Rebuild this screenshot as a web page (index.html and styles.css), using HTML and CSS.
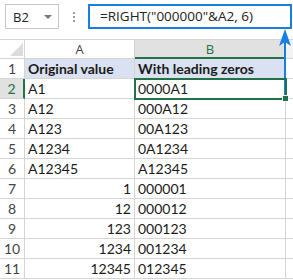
FILE: index.html
```html
<!DOCTYPE html>
<html>
<head>
    <title>RIGHT with leading zeros</title>
    <link rel="stylesheet" href="styles.css">
</head>
<body>
    <div class="toolbar">
        <div class="namebox">
            <span class="cellref">B2</span>
            <span class="caret"></span>
        </div>
        <div class="dots"><span></span><span></span><span></span></div>
        <div class="formula">=RIGHT("000000"&amp;A2, 6)</div>
    </div>

    <div class="sheet">
        <div class="corner"><span class="tri"></span></div>
        <div class="colhead">A</div>
        <div class="colhead sel">B</div>
        <div class="colhead last"></div>

        <div class="rowhead">1</div>
        <div class="cell hdr">Original value</div>
        <div class="cell hdr">With leading zeros</div>
        <div class="cell last"></div>

        <div class="rowhead sel">2</div>
        <div class="cell">A1</div>
        <div class="cell active">0000A1<span class="handle"></span></div>
        <div class="cell last"></div>

        <div class="rowhead">3</div>
        <div class="cell">A12</div>
        <div class="cell">000A12</div>
        <div class="cell last"></div>

        <div class="rowhead">4</div>
        <div class="cell">A123</div>
        <div class="cell">00A123</div>
        <div class="cell last"></div>

        <div class="rowhead">5</div>
        <div class="cell">A1234</div>
        <div class="cell">0A1234</div>
        <div class="cell last"></div>

        <div class="rowhead">6</div>
        <div class="cell">A12345</div>
        <div class="cell">A12345</div>
        <div class="cell last"></div>

        <div class="rowhead">7</div>
        <div class="cell num">1</div>
        <div class="cell">000001</div>
        <div class="cell last"></div>

        <div class="rowhead">8</div>
        <div class="cell num">12</div>
        <div class="cell">000012</div>
        <div class="cell last"></div>

        <div class="rowhead">9</div>
        <div class="cell num">123</div>
        <div class="cell">000123</div>
        <div class="cell last"></div>

        <div class="rowhead">10</div>
        <div class="cell num">1234</div>
        <div class="cell">001234</div>
        <div class="cell last"></div>

        <div class="rowhead">11</div>
        <div class="cell num">12345</div>
        <div class="cell">012345</div>
        <div class="cell last"></div>
    </div>

    <svg class="pointer" width="14" height="72" viewBox="0 0 14 72">
        <line x1="7" y1="6" x2="7" y2="72" stroke="#1a7fe3" stroke-width="2"/>
        <path d="M7 0 L13 17 L7 13 L1 17 Z" fill="#1a7fe3"/>
    </svg>
</body>
</html>
```

FILE: styles.css
```css
body {
    margin: 0;
    width: 293px;
    height: 280px;
    overflow: hidden;
    background: #fff;
    position: relative;
    font-family: Lato, "Liberation Sans", sans-serif;
    color: #1a1a1a;
}
.toolbar {
    display: flex;
    align-items: flex-start;
    height: 39px;
    padding: 4px 0 0 5px;
    box-sizing: border-box;
}
.namebox {
    width: 54px;
    height: 25px;
    box-sizing: border-box;
    border: 1px solid #c6c6c6;
    display: flex;
    align-items: center;
    justify-content: space-between;
    padding: 0 6px 0 7px;
    font-family: "Open Sans", sans-serif;
    font-size: 13px;
    color: #222;
}
.caret {
    width: 0;
    height: 0;
    border-left: 4px solid transparent;
    border-right: 4px solid transparent;
    border-top: 4px solid #777;
}
.dots {
    width: 29px;
    height: 25px;
    display: flex;
    flex-direction: column;
    align-items: center;
    justify-content: center;
    gap: 2px;
}
.dots span {
    width: 2px;
    height: 2px;
    background: #9a9a9a;
}
.formula {
    flex: 1;
    height: 25px;
    box-sizing: border-box;
    border: 2px solid #1a7fe3;
    border-right-width: 2px;
    margin-right: 1px;
    padding-left: 10px;
    font-family: "Open Sans", sans-serif;
    font-size: 13.5px;
    line-height: 21px;
    color: #222;
    white-space: nowrap;
}
.sheet {
    display: grid;
    grid-template-columns: 25px 110px 151px 7px;
    grid-template-rows: 19px repeat(11, 20px);
    border-top: 1px solid #d4d4d4;
}
.corner {
    border-right: 1px solid #d4d4d4;
    border-bottom: 1px solid #d4d4d4;
    position: relative;
}
.tri {
    position: absolute;
    right: 1px;
    bottom: 2px;
    width: 0;
    height: 0;
    border-left: 13px solid transparent;
    border-bottom: 13px solid #dcdcdc;
}
.colhead {
    border-right: 1px solid #d4d4d4;
    border-bottom: 1px solid #d4d4d4;
    text-align: center;
    font-family: "Open Sans", sans-serif;
    font-size: 13px;
    line-height: 18px;
    color: #444;
}
.colhead.sel {
    background: #e1e1e1;
    color: #217346;
    border-bottom: 2px solid #217346;
}
.colhead.last {
    background: #f3f3f3;
    border-right: none;
}
.rowhead {
    border-right: 1px solid #d4d4d4;
    border-bottom: 1px solid #d4d4d4;
    text-align: center;
    font-size: 14px;
    line-height: 20px;
    color: #444;
}
.rowhead.sel {
    background: #e1e1e1;
    color: #217346;
    border-right: 2px solid #217346;
}
.cell {
    border-right: 1px solid #d4d4d4;
    border-bottom: 1px solid #d4d4d4;
    padding: 0 3px;
    font-size: 14px;
    line-height: 20px;
    white-space: nowrap;
    overflow: hidden;
    position: relative;
}
.cell.last {
    border-right: none;
}
.cell.hdr {
    background: #d9e1f2;
    font-weight: bold;
}
.cell.num {
    text-align: right;
}
.cell.active {
    overflow: visible;
    outline: 2px solid #217346;
    outline-offset: -1px;
    z-index: 1;
}
.handle {
    position: absolute;
    right: -4px;
    bottom: -4px;
    width: 5px;
    height: 5px;
    background: #217346;
    border: 1px solid #fff;
}
.pointer {
    position: absolute;
    left: 278px;
    top: 29px;
}
```
